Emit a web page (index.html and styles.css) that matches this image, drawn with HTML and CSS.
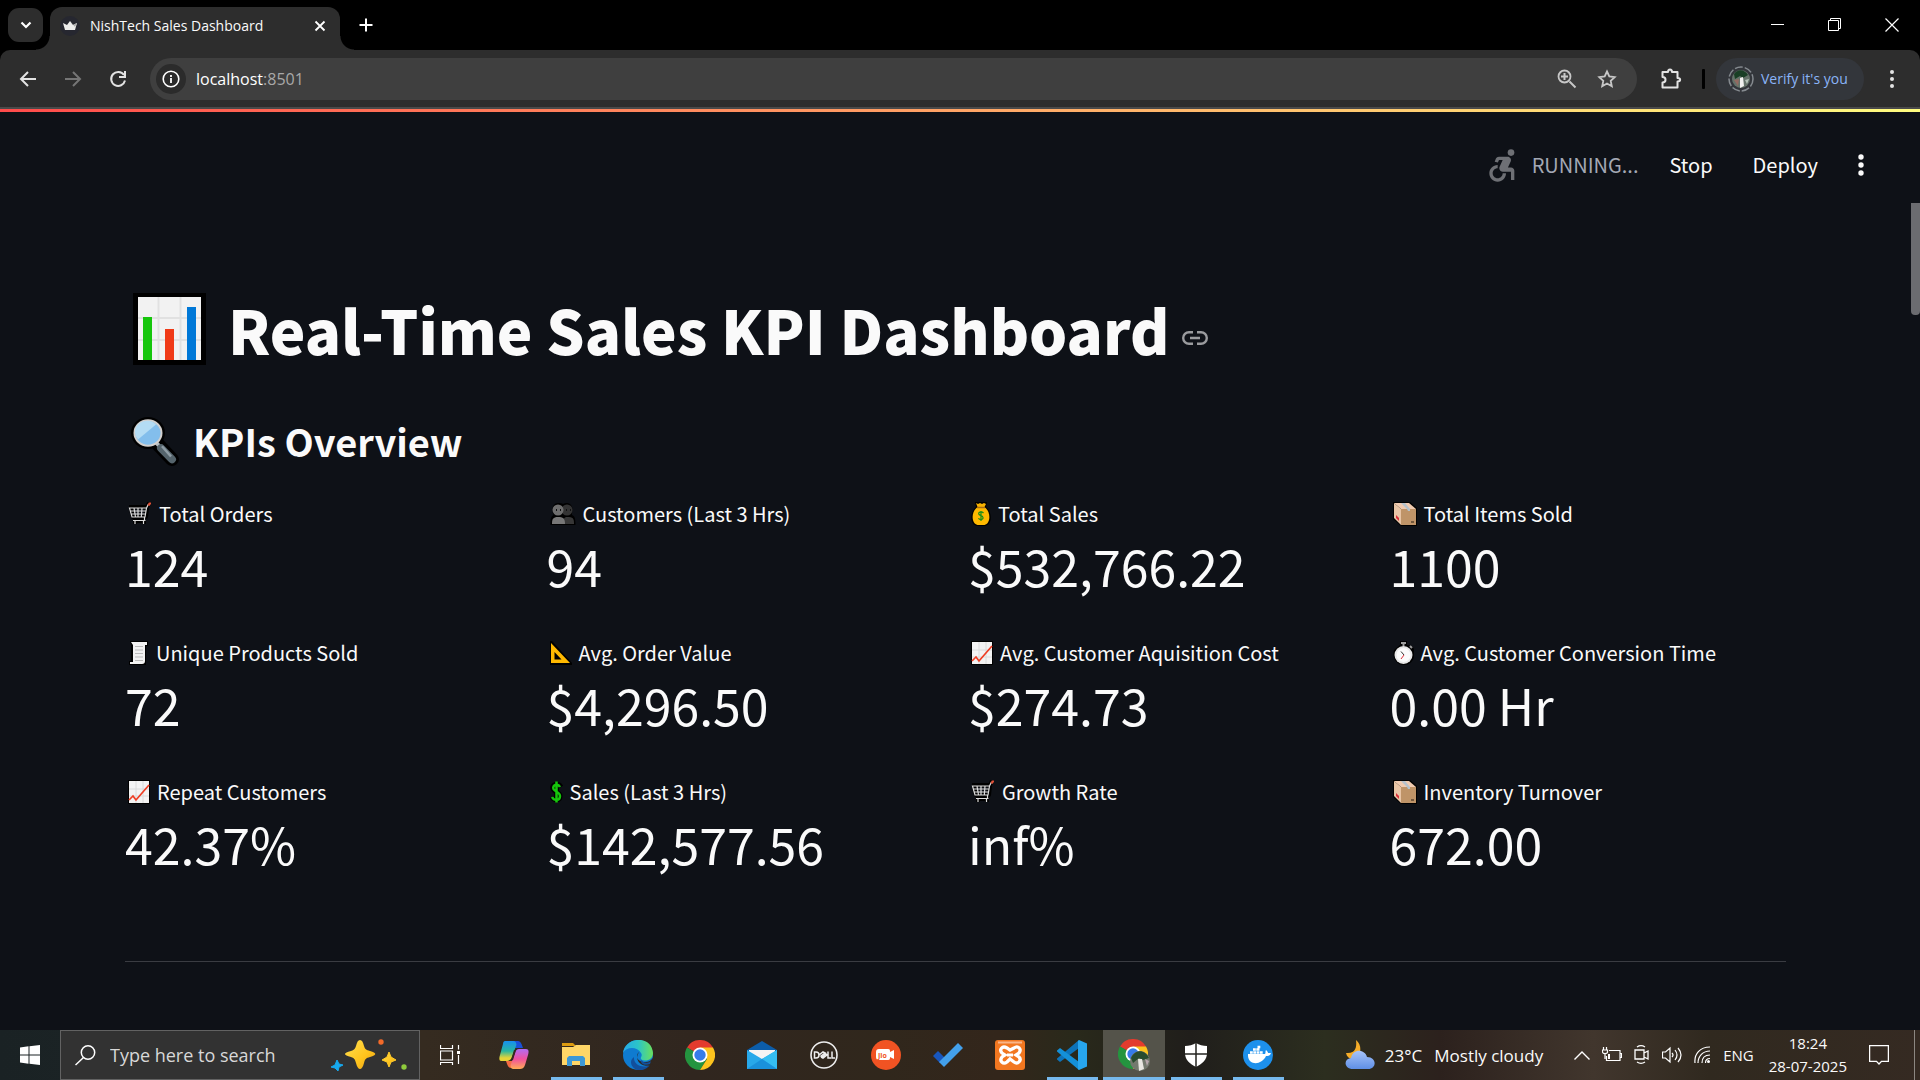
FILE: index.html
```html
<!DOCTYPE html>
<html lang="en">
<head>
<meta charset="utf-8">
<title>NishTech Sales Dashboard</title>
<link rel="stylesheet" href="styles.css">
</head>
<body>
<svg class="sprite" aria-hidden="true">
  <symbol id="cart" viewBox="0 0 24 24">
    <path d="M1 5H19L21 1H23M3 7l2 8h13l1-9M5 19h13M7 20v2M16 20v2" fill="none" stroke="#000" stroke-width="4" stroke-linejoin="round"/>
    <path d="M1.500 6H18.500L17 15H4ZM2.500 9h15M3.500 12h14M6 6l1.500 9M10 6v9M14 6l-.7 9M5 18.500h12.500M7 19v3M15.500 19v3M16.500 15v3M18.500 6l2-4" fill="none" stroke="#dcdcdc" stroke-width="1.200"/>
    <path d="M20.500 3.500l1-2h1.500" fill="none" stroke="#e0523a" stroke-width="2.200"/>
  </symbol>
  <symbol id="people" viewBox="0 0 26 24">
    <path d="M8 1c2 0 4 0 5 1 6-3 11 2 9 8v3c3 1 3.500 4 3.500 10H.5c0-6 0-8 3-10C1 7 3 1 8 1z" fill="#000"/>
    <circle cx="17" cy="8" r="5.500" fill="#343434"/><path d="M13 22c0-5 1-7 4-7 6 0 7 1 7 7z" fill="#373737"/>
    <circle cx="8" cy="8" r="5.500" fill="#6e6e6e"/><path d="M2 22c0-5 1-7 6-7s7 1 7 7z" fill="#777"/>
    <path d="M6 8h1M10 8h1M16 8h1M20 8h1" stroke="#111" stroke-width="2"/>
  </symbol>
  <symbol id="bag" viewBox="0 0 20 24">
    <path d="M4 0h12l-1 5c7 6 6 18-1 19H6C-1 23-2 11 5 5z" fill="#000"/>
    <path d="M5 1l2 1 2-1 2 1 2-1 2 1-1.500 3h-7z" fill="#f8b200"/><path d="M6.500 5h7c7 5 6 17 0 18h-7c-6-1-7-13 0-18z" fill="#ffb900"/>
    <path d="M6 5.500h8" stroke="#a86e15" stroke-width="1.500"/>
    <path d="M12.500 11c-2-2-6-1-4.500 1.500 1 1 4 1 4 3 .5 2.500-3.500 2.500-4.500.7M10 9v10" fill="none" stroke="#178c18" stroke-width="1.200"/>
  </symbol>
  <symbol id="box" viewBox="0 0 24 24">
    <path d="M0 0h17l7 6v18H8l-8-7z" fill="#000"/>
    <path d="M1 1h15l7 6H8z" fill="#f0cbb0"/><path d="M1 1l7 6v16l-7-7z" fill="#e8c5a6"/><path d="M8 7h15v16H8z" fill="#bf9468"/>
    <path d="M8 1h4l5 6v2h-2l-1-2z" fill="#b5c2cc"/><path d="M3 13l3 3v3l-3-3z" fill="#d9303a"/><path d="M18 19h3v2h-3z" fill="#73583c"/>
  </symbol>
  <symbol id="receipt" viewBox="0 0 21 24">
    <path d="M2 0h18v5h-2v19H1v-4h2V4z" fill="#000"/>
    <path d="M3 1h16v3h-2v16c0 2-1 3-3 3H2v-2h3V4z" fill="#f2f2f2"/>
    <path d="M7 5.500h8M7 9h8M7 12.500h8M7 16h8M7 19.500h8" stroke="#bbb" stroke-width="1"/>
  </symbol>
  <symbol id="ruler" viewBox="0 0 22 24">
    <path d="M0 0h2l20 22v2H0z" fill="#000"/><path fill-rule="evenodd" d="M1 2v20h19zm3.500 9 7 7.500h-7z" fill="#ffb900"/>
  </symbol>
  <symbol id="trend" viewBox="0 0 22 24">
    <path d="M0 0h22v24H0z" fill="#000"/><path d="M1 1h20v22H1z" fill="#f3f3f3"/>
    <path d="M8 1v22M15 1v22M1 9h20M1 16h20" stroke="#dadada"/><path d="M1 20l4-4 3 4L21 5" fill="none" stroke="#ef3d23" stroke-width="1.700"/>
  </symbol>
  <symbol id="watch" viewBox="0 0 21 24">
    <path d="M7 0h7v4l5 1 2 3c2 8-2 16-10 16S-1 16 1 9l6-5z" fill="#000"/>
    <circle cx="10.500" cy="14" r="9" fill="#e7e7e7"/><circle cx="10.500" cy="14" r="7" fill="#fbfbfb"/>
    <path d="M8 2h5M10.500 2v3M17 5l2 2" stroke="#9d9d9d" stroke-width="2"/><path d="M8 10.500l3 3.500" stroke="#333"/><path d="M11 14l-3 4" stroke="#df3038"/>
  </symbol>
  <symbol id="dollar" viewBox="0 0 13 24">
    <path d="M11 7C8 2 1 5 3 9c1 3 7 3 7 7 0 5-6 5-8 1M6.500 2v20" fill="none" stroke="#000" stroke-width="5"/>
    <path d="M10 7C8 3 2 5 3.500 9 5 12 10 12 10 16c0 5-6 5-8 1M6.500 1.500v21" fill="none" stroke="#16c60c" stroke-width="2.500"/>
  </symbol>
  <symbol id="chrome" viewBox="0 0 30 30">
    <path d="M15 15L2 7.500A15 15 0 0 1 28 7.500z" fill="#e33b2e"/><path d="M2 7.500A15 15 0 0 0 15 30l7-11z" fill="#24943f"/><path d="M15 7.500h13A15 15 0 0 1 15 30l7-11z" fill="#fcc31e"/>
    <circle cx="15" cy="15" r="7.500" fill="#fff"/><circle cx="15" cy="15" r="5.700" fill="#367bea"/>
  </symbol>
</svg>

<header class="browser">
  <div class="tabs">
    <button class="tab-menu" aria-label="Search tabs"><svg width="12" height="8" viewBox="0 0 12 8"><path d="M1.500 1.500L6 6l4.500-4.500" fill="none" stroke="#fff" stroke-width="2.200"/></svg></button>
    <div class="tab">
      <svg width="20" height="20" viewBox="0 0 20 20"><circle cx="10" cy="10" r="10" fill="#262730"/><path d="M3 7l4 2 3-4 3 4 4-2-2 7H5z" fill="#ececec"/><path d="M10 5l3 4 4-2-2 4z" fill="#aaa"/></svg>
      <span class="tab-title">NishTech Sales Dashboard</span>
      <button class="bare" aria-label="Close tab"><svg width="12" height="12" viewBox="0 0 12 12"><path d="M1.500 1.500l9 9M10.500 1.500l-9 9" stroke="#fff" stroke-width="1.800"/></svg></button>
    </div>
    <button class="bare new-tab" aria-label="New tab"><svg width="14" height="14" viewBox="0 0 14 14"><path d="M7 .5v13M.5 7h13" stroke="#fff" stroke-width="2"/></svg></button>
    <div class="window-controls">
      <button class="bare" aria-label="Minimize"><svg width="14" height="14" viewBox="0 0 14 14"><path d="M0 6.500h13" stroke="#fff"/></svg></button>
      <button class="bare" aria-label="Restore"><svg width="14" height="14" viewBox="0 0 14 14"><path d="M.5 2.500h10v10H.5zM2.500 2.500v-2h10v10h-2" fill="none" stroke="#fff"/></svg></button>
      <button class="bare" aria-label="Close"><svg width="14" height="14" viewBox="0 0 14 14"><path d="M.5.500l13 13M13.500.500l-13 13" stroke="#fff" stroke-width="1.200"/></svg></button>
    </div>
  </div>
  <div class="toolbar">
    <nav class="history">
      <button class="bare" aria-label="Back"><svg width="18" height="18" viewBox="0 0 18 18"><path d="M17 9H3M9 2L2 9l7 7" fill="none" stroke="#e3e3e3" stroke-width="2"/></svg></button>
      <button class="bare" aria-label="Forward"><svg width="18" height="18" viewBox="0 0 18 18"><path d="M1 9h14M9 2l7 7-7 7" fill="none" stroke="#757575" stroke-width="2"/></svg></button>
      <button class="bare" aria-label="Reload"><svg width="18" height="18" viewBox="0 0 18 18"><path d="M15 5a7 7 0 1 0 1 5.500M16 1v6h-6" fill="none" stroke="#e3e3e3" stroke-width="2"/></svg></button>
    </nav>
    <div class="omnibox">
      <button class="site-info" aria-label="Site information"><svg width="18" height="18" viewBox="0 0 18 18"><circle cx="9" cy="9" r="7.800" fill="none" stroke="#fff" stroke-width="1.600"/><path d="M9 8v5M9 5v2" stroke="#fff" stroke-width="1.800"/></svg></button>
      <span class="url">localhost<span class="port">:8501</span></span>
      <button class="bare" aria-label="Zoom"><svg width="20" height="20" viewBox="0 0 20 20"><path d="M12.500 12.500l6 6M4 7.500h7M7.500 4v7" stroke="#c7c7c7" stroke-width="2"/><circle cx="7.500" cy="7.500" r="6" fill="none" stroke="#c7c7c7" stroke-width="1.800"/></svg></button>
      <button class="bare" aria-label="Bookmark"><svg width="20" height="20" viewBox="0 0 20 20"><path d="M10 2.500l2.300 5 5.400.6-4 3.700 1.100 5.400-4.800-2.700-4.800 2.700 1.100-5.400-4-3.700 5.400-.6z" fill="none" stroke="#c7c7c7" stroke-width="1.800"/></svg></button>
    </div>
    <button class="bare extensions" aria-label="Extensions"><svg width="22" height="22" viewBox="0 0 22 22"><path d="M2.500 4h5.500c0-3.500 4-3.500 4 0h5.500v6c3.500 0 3.500 3.500 0 3.500v6h-15v-5c4 0 4-5.500 0-5.500z" fill="none" stroke="#e3e3e3" stroke-width="2" stroke-linejoin="round"/></svg></button>
    <span class="divider"></span>
    <button class="verify"><svg width="26" height="26" viewBox="0 0 26 26"><circle cx="13" cy="13" r="12" fill="none" stroke="#868b90" stroke-width="1.500" stroke-dasharray="8 2"/><circle cx="13" cy="13" r="9" fill="#65736a"/><path d="M6 8c4-5 10-5 14 1l-5 3-3-2-5 3z" fill="#193f25"/><path d="M12 12l3-1 1 9-4 2z" fill="#f1f1ef"/><path d="M17 14l4-1-2 5z" fill="#b4c2b8"/><path d="M6 14l5-1-1 7z" fill="#936a61"/></svg>Verify it's you</button>
    <button class="bare" aria-label="Browser menu"><svg width="6" height="20" viewBox="0 0 6 20"><g fill="#e3e3e3"><circle cx="3" cy="3" r="2"/><circle cx="3" cy="10" r="2"/><circle cx="3" cy="17" r="2"/></g></svg></button>
  </div>
</header>

<main class="app">
  <div class="status-bar">
    <svg class="runner" width="40" height="40" viewBox="0 0 24 24" fill="#6e7075"><circle cx="18" cy="4.540" r="2"/><path d="M15 17h-2c0 1.650-1.350 3-3 3s-3-1.350-3-3 1.350-3 3-3v-2c-2.760 0-5 2.240-5 5s2.240 5 5 5 5-2.240 5-5zm3-3.500h-1.860l1.670-3.670C18.420 8.500 17.440 7 15.960 7h-5.200c-.81 0-1.540.47-1.870 1.200L8.220 10l1.920.53.650-1.530H13l-1.830 4.100c-.6 1.330.39 2.900 1.850 2.900H18v5h2v-5.500c0-1.100-.9-2-2-2z"/></svg>
    <span class="running">RUNNING...</span>
    <button class="bare stop">Stop</button>
    <button class="bare deploy">Deploy</button>
    <button class="bare" aria-label="Main menu"><svg width="6" height="22" viewBox="0 0 6 22"><g fill="#fafafa"><circle cx="3" cy="3" r="2.700"/><circle cx="3" cy="11" r="2.700"/><circle cx="3" cy="19" r="2.700"/></g></svg></button>
  </div>
  <div class="scroll-thumb"></div>
  <div class="content">
    <h1>
      <svg width="73" height="72" viewBox="0 0 73 72"><path d="M0 0h73v72H0z" fill="#000"/><path d="M5 4h63v63H5z" fill="#f2f2f2"/><path d="M25.500 4v63M47.500 4v63M5 25h63M5 47h63" stroke="#e1e1e1" stroke-width="2"/><path d="M10 24h9v43h-9z" fill="#16c60c"/><path d="M32 36h9v31h-9z" fill="#f03a17"/><path d="M54 14h9v53h-9z" fill="#0078d7"/></svg>
      <span>Real-Time Sales KPI Dashboard</span>
      <a href="#kpis" aria-label="Link to heading"><svg width="26" height="14" viewBox="0 0 26 14"><path d="M11 1.200H7a5.800 5.800 0 0 0 0 11.600h4M15 1.200h4a5.800 5.800 0 0 1 0 11.600h-4M8 7h10" fill="none" stroke="#9a9b9e" stroke-width="2.400"/></svg></a>
    </h1>
    <h2 id="kpis">
      <svg width="48" height="50" viewBox="0 0 48 53" preserveAspectRatio="none"><path d="M27 30l14 16" stroke="#000" stroke-width="14" stroke-linecap="round"/><circle cx="17" cy="18" r="17" fill="#000"/><path d="M25 28l5 6" stroke="#b7bec2" stroke-width="4"/><path d="M30 34l11 12" stroke="#55646c" stroke-width="8" stroke-linecap="round"/><path d="M31 32l9 11" stroke="#8e9ca4" stroke-width="2.500"/><circle cx="17" cy="18" r="13.500" fill="#83beec" stroke="#d2d0ce" stroke-width="2"/><path d="M7 25A12 12 0 0 1 25 9z" fill="#b4dcf4"/></svg>
      <span>KPIs Overview</span>
    </h2>
    <section class="metrics">
      <div class="metric"><div class="label"><svg width="24" height="24"><use href="#cart"/></svg>Total Orders</div><div class="value">124</div></div>
      <div class="metric"><div class="label"><svg width="26" height="24"><use href="#people"/></svg>Customers (Last 3 Hrs)</div><div class="value">94</div></div>
      <div class="metric"><div class="label"><svg width="20" height="24"><use href="#bag"/></svg>Total Sales</div><div class="value">$532,766.22</div></div>
      <div class="metric"><div class="label"><svg width="24" height="24"><use href="#box"/></svg>Total Items Sold</div><div class="value">1100</div></div>
      <div class="metric"><div class="label"><svg width="21" height="24"><use href="#receipt"/></svg>Unique Products Sold</div><div class="value">72</div></div>
      <div class="metric"><div class="label"><svg width="22" height="24"><use href="#ruler"/></svg>Avg. Order Value</div><div class="value">$4,296.50</div></div>
      <div class="metric"><div class="label"><svg width="22" height="24"><use href="#trend"/></svg>Avg. Customer Aquisition Cost</div><div class="value">$274.73</div></div>
      <div class="metric"><div class="label"><svg width="21" height="24"><use href="#watch"/></svg>Avg. Customer Conversion Time</div><div class="value">0.00 Hr</div></div>
      <div class="metric"><div class="label"><svg width="22" height="24"><use href="#trend"/></svg>Repeat Customers</div><div class="value">42.37%</div></div>
      <div class="metric"><div class="label"><svg width="13" height="24"><use href="#dollar"/></svg>Sales (Last 3 Hrs)</div><div class="value">$142,577.56</div></div>
      <div class="metric"><div class="label"><svg width="24" height="24"><use href="#cart"/></svg>Growth Rate</div><div class="value">inf%</div></div>
      <div class="metric"><div class="label"><svg width="24" height="24"><use href="#box"/></svg>Inventory Turnover</div><div class="value">672.00</div></div>
    </section>
    <hr>
  </div>
</main>

<footer class="taskbar">
  <button class="start" aria-label="Start"><svg width="20" height="20" viewBox="0 0 20 20"><path d="M0 2.500L8.500 1.300V9.500H0zM9.500 1.200L20 0v9.500H9.500zM0 10.500h8.500v8.200L0 17.500zM9.500 10.500H20V20L9.500 18.800z" fill="#fff"/></svg></button>
  <label class="search">
    <svg width="21" height="21" viewBox="0 0 21 21"><circle cx="13" cy="7.500" r="6.700" fill="none" stroke="#fff" stroke-width="1.500"/><path d="M8.500 12.500L.5 20" stroke="#fff" stroke-width="1.500"/></svg>
    <input type="text" placeholder="Type here to search" aria-label="Search">
    <svg width="78" height="34" viewBox="0 0 78 34"><defs><linearGradient id="gold" x2="1" y2="1"><stop offset="0" stop-color="#ffe052"/><stop offset=".6" stop-color="#ffc31c"/><stop offset="1" stop-color="#e39b18"/></linearGradient></defs><path d="M30 2c2 0 3 2 4 6 1 3 2 4 6 5 7 2 7 4 0 6-4 1-5 2-6 6-2 8-6 8-8 0-1-4-2-5-5-6-8-2-8-4 0-6 3-1 4-2 5-5 1-4 2-6 4-6z" fill="url(#gold)"/><path d="M59 14l2 5 5 3-5 2-2 5-2-5-5-2 5-3z" fill="url(#gold)" stroke="#ffc928" stroke-linejoin="round"/><path d="M7 22l2 4 4 1-4 2-1 4-3-3-4-1 4-2z" fill="#16a9ee" stroke="#16a9ee" stroke-linejoin="round"/><circle cx="51" cy="4" r="2.700" fill="#f36a29"/><circle cx="74" cy="29" r="2.700" fill="#8fcb3c"/></svg>
  </label>
  <nav class="apps">
    <button aria-label="Task view"><svg width="20" height="20" viewBox="0 0 20 20"><path d="M.5 6h12v9H.5zM.5 0v3.500h12V0M.5 20v-2.500h12V20M18.500 0v4.500M18.500 10v9" fill="none" stroke="#fff" stroke-width="1.200"/><path d="M17 6h3v3h-3z" fill="#fff"/></svg></button>
    <button aria-label="Copilot"><svg width="30" height="28" viewBox="0 0 30 28"><defs><linearGradient id="ca" x2="0" y2="1"><stop stop-color="#178ff0"/><stop offset=".5" stop-color="#28b6a0"/><stop offset=".85" stop-color="#e5d438"/></linearGradient><linearGradient id="cb" x2="0" y2="1"><stop stop-color="#b06cf5"/><stop offset=".5" stop-color="#f0519e"/><stop offset="1" stop-color="#ffac55"/></linearGradient></defs><path d="M14 0h5c3 0 4 4 5 7h-7c-2 0-2 0-3-2z" fill="#1a51d8"/><path d="M6 0h8c3 0 4 3 3 5l-4 11c-1 3-3 4-6 4H2c-2 0-2-3-1-6L4 3c0-2 1-3 2-3z" fill="url(#ca)"/><path d="M7 20h7l2-2 2 9h-6c-3 0-4-4-5-7z" fill="#f46c43"/><path d="M20 8h7c3 0 3 3 2 6l-3 10c-1 3-3 4-5 4h-7c-2 0-3-3-2-5l4-11c1-3 2-4 4-4z" fill="url(#cb)"/><path d="M15 9h2l-3 10h-2z" fill="#35291f"/></svg></button>
    <button class="open" aria-label="File Explorer"><svg width="28" height="24" viewBox="0 0 28 24"><path d="M0 0h11l3 3H0z" fill="#dc9b10"/><path d="M0 4h11l3-2h14v20H0z" fill="#ffd667"/><path d="M5 23v-8l2-2h14l2 2v8h-5v-5h-8v5z" fill="#3c98d6"/></svg></button>
    <button class="open" aria-label="Edge"><svg width="30" height="30" viewBox="0 0 30 30"><defs><linearGradient id="ea"><stop stop-color="#26a9e8"/><stop offset=".5" stop-color="#2bc4c8"/><stop offset="1" stop-color="#6be05c"/></linearGradient></defs><circle cx="15" cy="15" r="15" fill="#0f7bd0"/><path d="M11 17c-1 8 9 12 16 8-3 4-8 6-12 5-6-1-10-9-4-13z" fill="#124f9c"/><path d="M0 13C2-4 29-5 30 13c0 8-9 9-12 6-1-2 2-3 0-6C14 6 3 7 0 13z" fill="url(#ea)"/><path d="M16 12c-3 2-3 9 4 10 4 0 6 0 8-2l2-2v6l-2 1c-7 3-18-3-12-13z" fill="#30271f"/><path d="M18 20c4 4 8 3 10 1l-1 3c-5 2-10 0-9-4z" fill="#124f9c"/></svg></button>
    <button aria-label="Chrome"><svg width="30" height="30"><use href="#chrome"/></svg></button>
    <button aria-label="Mail"><svg width="30" height="28" viewBox="0 0 30 28"><path d="M0 9L15 0l15 9v5H0z" fill="#0c5da9"/><path d="M2 9h26v9H2z" fill="#f6f4f4"/><path d="M0 9l15 9 15-9v19H0z" fill="#28a8ea"/><path d="M15 18L30 9v19z" fill="#35bdf1"/><path d="M0 28l15-10 15 10z" fill="#1a91db"/></svg></button>
    <button aria-label="Dell"><svg width="28" height="28" viewBox="0 0 28 28"><circle cx="14" cy="14" r="13" fill="none" stroke="#eee" stroke-width="1.600"/><path d="M4.500 11v6H6c4 0 4-6 0-6zM9 14l4-3 2 1-4 3 1 1 4-3 1 1-4 3-2-1M18 10.500V17h3M22 10.500V17h3" fill="none" stroke="#eee" stroke-width="1.500"/></svg></button>
    <button aria-label="JioMeet"><svg width="30" height="30" viewBox="0 0 30 30"><circle cx="15" cy="15" r="15" fill="#f15323"/><path d="M8 9h9c2 0 2 1 2 3l4-2v9l-4-2c0 2 0 3-2 3H8c-2 0-3-1-3-3v-5c0-2 1-3 3-3z" fill="#fff"/><text class="jio" x="7" y="18">Jio</text></svg></button>
    <button aria-label="To Do"><svg width="30" height="25" viewBox="0 0 30 25"><path d="M5 8l7 7-5 5-7-7z" fill="#1856bd"/><path d="M25 0l5 5-19 19-5-5z" fill="#43a0eb"/></svg></button>
    <button aria-label="XAMPP"><svg width="30" height="30" viewBox="0 0 30 30"><rect width="30" height="30" rx="3" fill="#f27720"/><path d="M3 1.500h24v2H3z" fill="#f9b587"/><path d="M12 8c-5-3-8 2-5 5l3 2-3 2c-3 4 1 8 5 5l3-3 4 3c4 3 8-2 5-5l-3-2 3-2c3-4-1-8-5-5l-4 2z" fill="none" stroke="#fff" stroke-width="3.300"/><path d="M12 15h6" stroke="#fff" stroke-width="3"/></svg></button>
    <button class="open" aria-label="Visual Studio Code"><svg width="30" height="30" viewBox="0 0 30 30"><path d="M22 0v8L3 22 0 19.500v-1z" fill="#0d73b9"/><path d="M3 8l19 14v8L0 11.500v-1z" fill="#1490d8"/><path d="M22 0l8 3.500v23L22 30l-1-1V1z" fill="#27a6ee"/></svg></button>
    <button class="open active" aria-label="NishTech Sales Dashboard"><svg width="32" height="32" viewBox="0 0 32 32"><svg width="30" height="30"><use href="#chrome"/></svg><circle cx="22" cy="22" r="10" fill="#73796e"/><path d="M13 19c4-9 14-9 18 0l-6 2-4-2-6 5z" fill="#284b2f"/><path d="M20 20h4l2 10-5 2z" fill="#e8e7e2"/><path d="M27 20l4 2-2 5z" fill="#b6a6ac"/></svg></button>
    <button class="open" aria-label="Windows Security"><svg width="22" height="24" viewBox="0 0 22 24"><path d="M11 0c3 2 7 3 11 3v7c0 7-5 11-11 14C5 21 0 17 0 10V3c4 0 8-1 11-3z" fill="#fff"/><path d="M11 0v24M0 11h22" stroke="#252420" stroke-width="1.500"/></svg></button>
    <button class="open" aria-label="Docker"><svg width="30" height="30" viewBox="0 0 30 30"><circle cx="15" cy="15" r="15" fill="#1d90ec"/><path d="M5 14h17c1-1 0-3 1-4 1 1 2 2 2 3h3c-1 3-3 3-5 3-4 9-17 10-18 0z" fill="#fff"/><path d="M7 12.500h13M10 9.500h7M14.500 7h3" stroke="#fff" stroke-width="2.500" stroke-dasharray="2.800 .5"/></svg></button>
  </nav>
  <div class="tray">
    <button class="weather"><svg width="30" height="30" viewBox="0 0 30 30"><defs><linearGradient id="cloud" x2="0" y2="1"><stop stop-color="#a7c4fa"/><stop offset="1" stop-color="#5f8fe6"/></linearGradient></defs><path d="M11 0c6 5 6 14-1 18-4 2-8 0-9-5 9 1 11-5 10-13z" fill="#f6ad29"/><path d="M8 29c-9 0-10-10-2-11 2-10 14-9 16-1 10 0 10 12 1 12z" fill="url(#cloud)"/></svg><span>23°C</span><span>Mostly cloudy</span></button>
    <button class="bare" aria-label="Show hidden icons"><svg width="16" height="9" viewBox="0 0 16 9"><path d="M.5 8.500L8 1l7.500 7.500" fill="none" stroke="#fff" stroke-width="1.400"/></svg></button>
    <button class="bare" aria-label="Battery"><svg width="20" height="16" viewBox="0 0 20 16"><path d="M7 3.500h11v10H4.500V9M18.500 6.500h1v4h-1M1.500 0v3M4.500 0v3M.5 3h5v2c0 2-5 2-5 0zM3 7v5" fill="none" stroke="#fff" stroke-width="1.200"/><path d="M6 7h2v5H6z" fill="#fff"/></svg></button>
    <button class="bare" aria-label="Camera"><svg width="16" height="20" viewBox="0 0 16 20"><path d="M1 5h9v9H1zM10 8l4-2v8l-4-2M3 2c3-2 5-2 8 0M3 17c3 2 5 2 8 0" fill="none" stroke="#fff" stroke-width="1.300"/></svg></button>
    <button class="bare" aria-label="Volume"><svg width="20" height="18" viewBox="0 0 20 18"><path d="M.5 6h3L8 2v14l-4.500-4h-3zM10 7q2 2 0 4M13 4q4 5 0 10M16 2q6 7 0 14" fill="none" stroke="#fff" stroke-width="1.200"/></svg></button>
    <button class="bare" aria-label="Wi-Fi"><svg width="17" height="18" viewBox="0 0 17 18"><path d="M1 17C0 8 6 1 16 1M4 17C4 10 9 5 16 5M8 17c0-5 3-8 8-8M11.500 17c0-3 2-4.500 4.500-4.500" fill="none" stroke="#fff" stroke-width="1.200"/><circle cx="14.500" cy="15.500" r="1.500" fill="#fff"/></svg></button>
    <span class="lang">ENG</span>
    <span class="clock"><span>18:24</span><span>28-07-2025</span></span>
    <button class="bare" aria-label="Notifications"><svg width="20" height="20" viewBox="0 0 20 20"><path d="M.6.600h18.800v15.800h-6.900L10 19l-2.500-2.600H.6z" fill="none" stroke="#fff" stroke-width="1.300"/></svg></button>
    <span class="show-desktop"></span>
  </div>
</footer>
</body>
</html>
```
FILE: styles.css
```css
* { box-sizing: border-box; }

body {
  margin: 0;
  min-height: 100vh;
  display: flex;
  flex-direction: column;
  background: #0e1117;
  color: #fafafa;
  font-family: "Open Sans", "Noto Sans", sans-serif;
}

svg { display: block; flex: none; }
.sprite { position: absolute; width: 0; height: 0; }

button {
  margin: 0;
  padding: 0;
  border: 0;
  background: none;
  color: inherit;
  font: inherit;
}
.bare { display: flex; align-items: center; justify-content: center; }

/* Browser frame */
.browser { background: #000; }
.tabs { display: flex; align-items: center; height: 50px; padding-left: 8px; }
.tab-menu {
  display: grid;
  place-items: center;
  width: 35px;
  height: 34px;
  border-radius: 11px;
  background: #2d2d2d;
}
.tab {
  display: flex;
  align-items: center;
  align-self: flex-end;
  gap: 10px;
  position: relative;
  width: 290px;
  height: 43px;
  margin-left: 7px;
  padding: 0 14px 6px 10px;
  border-radius: 12px 12px 0 0;
  background: #2d2d2d;
}
.tab::before, .tab::after {
  content: "";
  position: absolute;
  bottom: 0;
  width: 14px;
  height: 14px;
}
.tab::before { right: 100%; background: radial-gradient(circle at 0 0, transparent 13px, #2d2d2d 14px); }
.tab::after { left: 100%; background: radial-gradient(circle at 100% 0, transparent 13px, #2d2d2d 14px); }
.tab-title { flex: 1; font-size: 14px; }
.new-tab { margin-left: 19px; }
.window-controls { display: flex; margin-left: auto; }
.window-controls button { width: 57px; height: 48px; }

.toolbar {
  display: flex;
  align-items: center;
  height: 59px;
  padding: 0 25px 0 19px;
  border-bottom: 2px solid #4a4a4a;
  border-radius: 10px 10px 0 0;
  background: #2d2d2d;
}
.history { display: flex; gap: 27px; margin-right: 23px; }
.omnibox {
  display: flex;
  flex: 1;
  align-items: center;
  gap: 20px;
  height: 42px;
  padding: 0 20px 0 6px;
  border-radius: 21px;
  background: #3f3f3f;
}
.site-info {
  display: grid;
  place-items: center;
  width: 30px;
  height: 30px;
  border-radius: 50%;
  background: #2b2b2b;
}
.url { flex: 1; margin-left: -10px; font-size: 16px; color: #fff; }
.port { color: #a8a8a8; }
.extensions { margin: 0 20px 0 23px; }
.divider { width: 3px; height: 20px; border-radius: 1px; background: #000; }
.verify {
  display: flex;
  align-items: center;
  gap: 7px;
  width: 148px;
  height: 42px;
  margin: 0 25px 0 11px;
  padding-left: 12px;
  border-radius: 21px;
  background: #33363b;
  color: #8ab4f8;
  font-size: 14px;
}

/* Application */
.app {
  flex: 1;
  position: relative;
  border-top: 3px solid;
  border-image: linear-gradient(90deg, #ff4b4b, #fffd80) 1;
  font-family: "Noto Sans CJK SC", "Noto Sans CJK JP", sans-serif;
}
.status-bar {
  display: flex;
  align-items: center;
  justify-content: flex-end;
  height: 105px;
  padding-right: 56px;
  font-size: 20px;
}
.running { margin: 0 31px 0 11px; color: #a3a8b4; }
.stop { margin-right: 40px; }
.deploy { margin-right: 40px; }
.scroll-thumb {
  position: absolute;
  top: 91px;
  right: 0;
  width: 9px;
  height: 112px;
  border-radius: 0 0 4px 4px;
  background: #6b6c70;
}
.content { padding: 64px 134px 66px 125px; }

h1, h2 { display: flex; align-items: center; margin: 0; padding-left: 6px; }
h1 { height: 96px; gap: 22px; padding-left: 8px; font-size: 60px; line-height: 96px; font-weight: 900; }
h1 a { margin: 18px 0 0 -10px; }
h2 { height: 58px; gap: 14px; margin-top: 35px; font-size: 38px; line-height: 58px; font-weight: 700; }

.metrics {
  display: grid;
  grid-template-columns: repeat(4, 1fr);
  gap: 26px 25px;
  margin-top: 27px;
}
.label {
  display: flex;
  align-items: center;
  gap: 7px;
  height: 34px;
  padding-left: 3px;
  font-size: 20px;
  line-height: 34px;
  white-space: nowrap;
}
.value { padding-bottom: 10px; font-size: 50px; line-height: 69px; }
hr { margin: 73px 0 0; border: 0; border-top: 1px solid #3a3c42; }

/* Taskbar */
.taskbar {
  display: flex;
  height: 50px;
  background: linear-gradient(90deg, #1a2224 0%, #1b2325 4%, #352b20 22%, #30261f 36%, #30271c 46%, #33261b 52%, #29291b 56%, #201e1b 62%, #2c2e1f 69%, #2c211d 75%, #41362d 83%, #30291f 89%, #352a22 100%);
}
.start { display: grid; place-items: center; width: 60px; }
.search {
  display: flex;
  align-items: center;
  width: 360px;
  padding: 0 11px 0 14px;
  border: 1px solid #626262;
  background: #323232;
}
.search input {
  flex: 1;
  min-width: 0;
  margin-left: 14px;
  padding: 0;
  border: 0;
  outline: 0;
  background: none;
  font: 18px "Open Sans", "Noto Sans", sans-serif;
}
.search input::placeholder { color: #d8d8d8; opacity: 1; }
.apps { display: flex; }
.apps button { display: grid; place-items: center; position: relative; width: 62px; }
.apps button:first-child { width: 63px; padding-right: 3px; }
.apps .active { background: #54534a; }
.apps .open::after {
  content: "";
  position: absolute;
  bottom: 0;
  left: 6px;
  right: 5px;
  height: 3px;
  background: #76b9ed;
}
.apps .active::after { left: 0; right: 0; }
.jio { font: 700 7px "Open Sans", sans-serif; fill: #f15323; }

.tray { display: flex; align-items: center; margin-left: auto; }
.tray > .bare { width: 30px; height: 50px; }
.weather { display: flex; align-items: center; gap: 10px; margin-right: 24px; font-size: 17px; }
.weather span + span { margin-left: 2px; }
.lang { margin: 0 15px 0 6px; font-size: 15px; }
.clock { display: grid; margin-right: 17px; font-size: 15px; line-height: 23px; text-align: center; }
.show-desktop { width: 6px; height: 50px; margin-left: 20px; border-left: 1px solid #8c8781; }
```
